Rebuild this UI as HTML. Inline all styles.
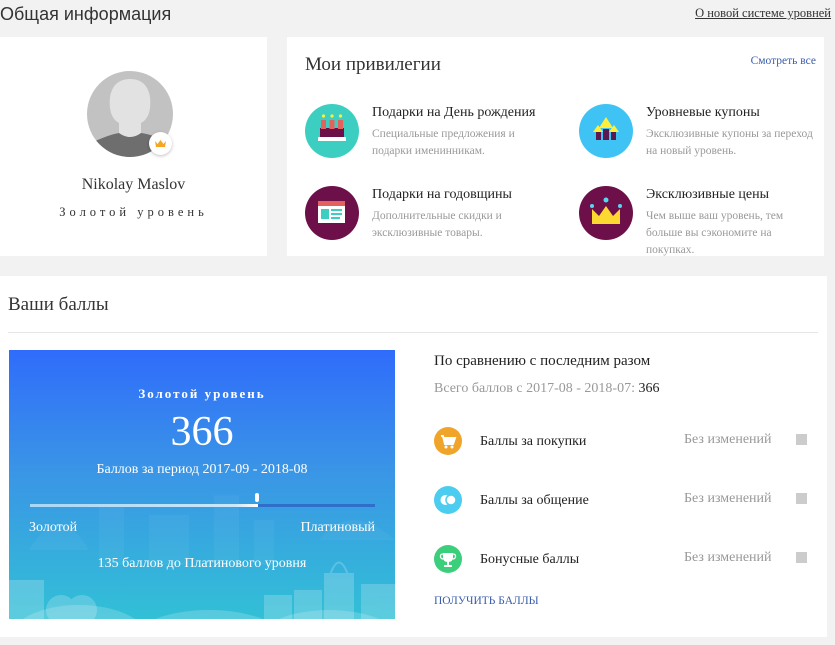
<!DOCTYPE html>
<html><head><meta charset="utf-8">
<style>
*{margin:0;padding:0;box-sizing:border-box}
html{width:835px;height:645px;overflow:hidden}
body{width:835px;height:645px;background:#f2f2f2;position:relative;overflow:hidden;font-family:"Liberation Serif",serif;color:#222}
.abs{position:absolute}
.card{position:absolute;background:#fff}
.ic{position:absolute;width:54px;height:54px;border-radius:50%;overflow:hidden}
.pt{position:absolute;font-size:14px;color:#222;white-space:nowrap}
.pd{position:absolute;font-size:11.5px;color:#999;line-height:17px}
.row{position:absolute;left:434px;width:380px;height:32px}
.row .c{position:absolute;left:0;top:0;width:28px;height:28px;border-radius:50%}
.row .t{position:absolute;left:46px;top:7px;font-size:14px;color:#222}
.row .s{position:absolute;left:250px;top:5px;font-size:14px;color:#999}
.row .sq{position:absolute;left:362px;top:7px;width:11px;height:11px;background:#ccc}
</style></head><body>
<div class="abs" style="left:0;top:4px;font-family:'Liberation Sans',sans-serif;font-size:18px;color:#333">Общая информация</div>
<div class="abs" style="right:4px;top:6px;font-size:12.5px;color:#333;text-decoration:underline">О новой системе уровней</div>

<div class="card" style="left:0;top:37px;width:267px;height:219px">
  <svg class="abs" style="left:87px;top:34px" width="88" height="88" viewBox="0 0 88 88">
    <defs><clipPath id="cp"><circle cx="43" cy="43" r="43"/></clipPath></defs>
    <g clip-path="url(#cp)">
      <rect width="88" height="88" fill="#c2c2c2"/>
      <path d="M0 74 Q20 64 32 62 L54 62 Q68 64 88 74 L88 88 L0 88Z" fill="#6e6e6e"/>
      <path d="M32 62 L32 52 Q21 46 23 26 Q26 8 43 8 Q60 8 63 26 Q65 46 54 52 L54 62 Q43 70 32 62Z" fill="#e2e2e2"/>
    </g>
  </svg>
  <div class="abs" style="left:149px;top:95px;width:23px;height:23px;border-radius:50%;background:#fff;box-shadow:0 1px 3px rgba(0,0,0,.25)">
    <svg width="23" height="23" viewBox="0 0 23 23"><path d="M6 9 L8.5 12 L11.5 8 L14.5 12 L17 9 L16 15 L7 15Z" fill="#f5a623"/></svg>
  </div>
  <div class="abs" style="left:0;width:267px;top:139px;text-align:center;font-size:16px;color:#333">Nikolay Maslov</div>
  <div class="abs" style="left:0;width:267px;top:168px;text-align:center;font-size:12.5px;letter-spacing:4px;color:#333">Золотой уровень</div>
</div>

<div class="card" style="left:287px;top:37px;width:537px;height:219px">
  <div class="abs" style="left:18px;top:17px;font-size:19px;color:#333">Мои привилегии</div>
  <div class="abs" style="right:8px;top:18px;font-size:11.5px;color:#3a5dae">Смотреть все</div>

  <div class="ic" style="left:18px;top:67px;background:#3ccfc1">
    <svg width="54" height="54" viewBox="0 0 54 54"><rect x="13" y="33" width="28" height="4" fill="#fff"/><rect x="15" y="24" width="24" height="9" fill="#6d1049"/><rect x="16" y="16" width="5" height="9" fill="#e4625e"/><rect x="24.5" y="16" width="5" height="9" fill="#e4625e"/><rect x="33" y="16" width="5" height="9" fill="#e4625e"/><circle cx="18.5" cy="12" r="1.6" fill="#ffef3a"/><circle cx="27" cy="12" r="1.6" fill="#ffef3a"/><circle cx="35.5" cy="12" r="1.6" fill="#ffef3a"/></svg>
  </div>
  <div class="pt" style="left:85px;top:68px">Подарки на День рождения</div>
  <div class="pd" style="left:85px;top:89px">Специальные предложения и<br>подарки именинникам.</div>

  <div class="ic" style="left:18px;top:149px;background:#6d1049">
    <svg width="54" height="54" viewBox="0 0 54 54"><rect x="13" y="15" width="27" height="22" fill="#fff"/><rect x="13" y="15" width="27" height="5" fill="#e4625e"/><rect x="16" y="23" width="8" height="10" fill="#3ccfc1"/><rect x="26" y="23" width="11" height="2" fill="#3ccfc1"/><rect x="26" y="27" width="11" height="2" fill="#3ccfc1"/><rect x="26" y="31" width="9" height="2" fill="#3ccfc1"/></svg>
  </div>
  <div class="pt" style="left:85px;top:150px">Подарки на годовщины</div>
  <div class="pd" style="left:85px;top:171px">Дополнительные скидки и<br>эксклюзивные товары.</div>

  <div class="ic" style="left:292px;top:67px;background:#3fc3f5">
    <svg width="54" height="54" viewBox="0 0 54 54"><rect x="17" y="27" width="5" height="9" fill="#5b1a4f"/><rect x="24" y="25" width="6" height="11" fill="#5b1a4f"/><rect x="32" y="27" width="5" height="9" fill="#5b1a4f"/><path d="M27 13 L34 24 L20 24Z" fill="#ffef3a"/><path d="M19 21 L24 28 L14 28Z" fill="#ffef3a"/><path d="M35 21 L40 28 L30 28Z" fill="#ffef3a"/></svg>
  </div>
  <div class="pt" style="left:359px;top:68px">Уровневые купоны</div>
  <div class="pd" style="left:359px;top:89px">Эксклюзивные купоны за переход<br>на новый уровень.</div>

  <div class="ic" style="left:292px;top:149px;background:#6d1049">
    <svg width="54" height="54" viewBox="0 0 54 54"><path d="M13 23 L20 30 L27 20 L34 30 L41 23 L41 38 L13 38Z" fill="#fbd931"/><circle cx="13" cy="20" r="2" fill="#57d6f0"/><circle cx="27" cy="14" r="2.5" fill="#57d6f0"/><circle cx="41" cy="20" r="2" fill="#57d6f0"/></svg>
  </div>
  <div class="pt" style="left:359px;top:150px">Эксклюзивные цены</div>
  <div class="pd" style="left:359px;top:171px">Чем выше ваш уровень, тем<br>больше вы сэкономите на<br>покупках.</div>
</div>

<div class="card" style="left:0;top:276px;width:827px;height:361px">
  <div class="abs" style="left:8px;top:18px;font-size:19px;color:#333">Ваши баллы</div>
  <div class="abs" style="left:8px;top:56px;width:810px;height:1px;background:#e6e6e6"></div>

  <div class="abs" style="left:9px;top:74px;width:386px;height:269px;background:linear-gradient(#2f6cfb 0%,#3a95e6 45%,#32c0d6 100%);overflow:hidden">
    <svg class="abs" style="left:0;top:0" width="386" height="269" viewBox="0 0 386 269">
      <g fill="#ffffff" opacity="0.04"><rect x="90" y="155" width="25" height="60"/><rect x="140" y="165" width="40" height="50"/><rect x="205" y="145" width="25" height="70"/><rect x="245" y="170" width="20" height="45"/><path d="M20 200 Q50 150 80 200Z"/><path d="M310 190 Q340 150 386 190Z"/></g>
      <g fill="#ffffff" opacity="0.18"><ellipse cx="70" cy="290" rx="70" ry="35"/><ellipse cx="200" cy="295" rx="80" ry="35"/><ellipse cx="320" cy="290" rx="70" ry="30"/></g>
      <g fill="#ffffff" opacity="0.2"><rect x="0" y="230" width="35" height="39"/><circle cx="52" cy="260" r="15"/><circle cx="73" cy="260" r="15"/><rect x="255" y="245" width="28" height="24"/><rect x="285" y="240" width="28" height="29"/><rect x="315" y="223" width="30" height="46"/><path d="M321 225 Q330 200 339 225" fill="none" stroke="#fff" stroke-width="2"/><rect x="352" y="234" width="34" height="35"/></g>
    </svg>
    <div class="abs" style="left:0;width:386px;top:36px;text-align:center;font-size:13px;letter-spacing:2px;color:#fff;font-weight:bold">Золотой уровень</div>
    <div class="abs" style="left:0;width:386px;top:58px;text-align:center;font-size:42px;color:#fff">366</div>
    <div class="abs" style="left:0;width:386px;top:112px;text-align:center;font-size:14px;color:#fff">Баллов за период 2017-09 - 2018-08</div>
    <div class="abs" style="left:21px;top:154px;width:345px;height:3px;background:#2f6ec9"></div>
    <div class="abs" style="left:21px;top:154px;width:228px;height:3px;background:linear-gradient(90deg,#a9d7f4,#cbe8fb 90%,#fff)"></div>
    <div class="abs" style="left:246px;top:143px;width:4px;height:9px;border-radius:2px;background:#fff"></div>
    <div class="abs" style="left:20px;top:170px;font-size:14px;color:#fff">Золотой</div>
    <div class="abs" style="right:20px;top:170px;font-size:14px;color:#fff">Платиновый</div>
    <div class="abs" style="left:0;width:386px;top:206px;text-align:center;font-size:14px;color:#fff">135 баллов до Платинового уровня</div>
  </div>

  <div class="abs" style="left:434px;top:77px;font-size:15px;color:#222">По сравнению с последним разом</div>
  <div class="abs" style="left:434px;top:105px;font-size:14px;color:#999">Всего баллов с 2017-08 - 2018-07: <span style="color:#222">366</span></div>
</div>

<div class="row" style="top:427px"><div class="c" style="background:#f0a42a"><svg width="28" height="28" viewBox="0 0 28 28"><path d="M7 9 L9 9 L11 17 L19 17 L21 11 L10 11" fill="none" stroke="#fff" stroke-width="2"/><rect x="10" y="11" width="10" height="5" fill="#fff"/><circle cx="12" cy="20" r="1.5" fill="#fff"/><circle cx="18" cy="20" r="1.5" fill="#fff"/></svg></div><div class="t">Баллы за покупки</div><div class="s">Без изменений</div><div class="sq"></div></div>
<div class="row" style="top:486px"><div class="c" style="background:#4ccdef"><svg width="28" height="28" viewBox="0 0 28 28"><circle cx="11.5" cy="14" r="5" fill="#fff"/><circle cx="17" cy="14" r="5" fill="#fff" stroke="#4ccdef" stroke-width="1.5"/></svg></div><div class="t">Баллы за общение</div><div class="s">Без изменений</div><div class="sq"></div></div>
<div class="row" style="top:545px"><div class="c" style="background:#3ccf7b"><svg width="28" height="28" viewBox="0 0 28 28"><path d="M9 8 L19 8 L19 12 Q19 17 14 17 Q9 17 9 12Z" fill="#fff"/><path d="M9 9 Q6 9 6.5 12 Q7 14 9.5 14 M19 9 Q22 9 21.5 12 Q21 14 18.5 14" fill="none" stroke="#fff" stroke-width="1.3"/><rect x="13" y="17" width="2" height="3" fill="#fff"/><rect x="10" y="20" width="8" height="2" fill="#fff"/></svg></div><div class="t">Бонусные баллы</div><div class="s">Без изменений</div><div class="sq"></div></div>
<div class="abs" style="left:434px;top:595px;font-size:11.5px;color:#3a5dae">ПОЛУЧИТЬ БАЛЛЫ</div>
</body></html>
